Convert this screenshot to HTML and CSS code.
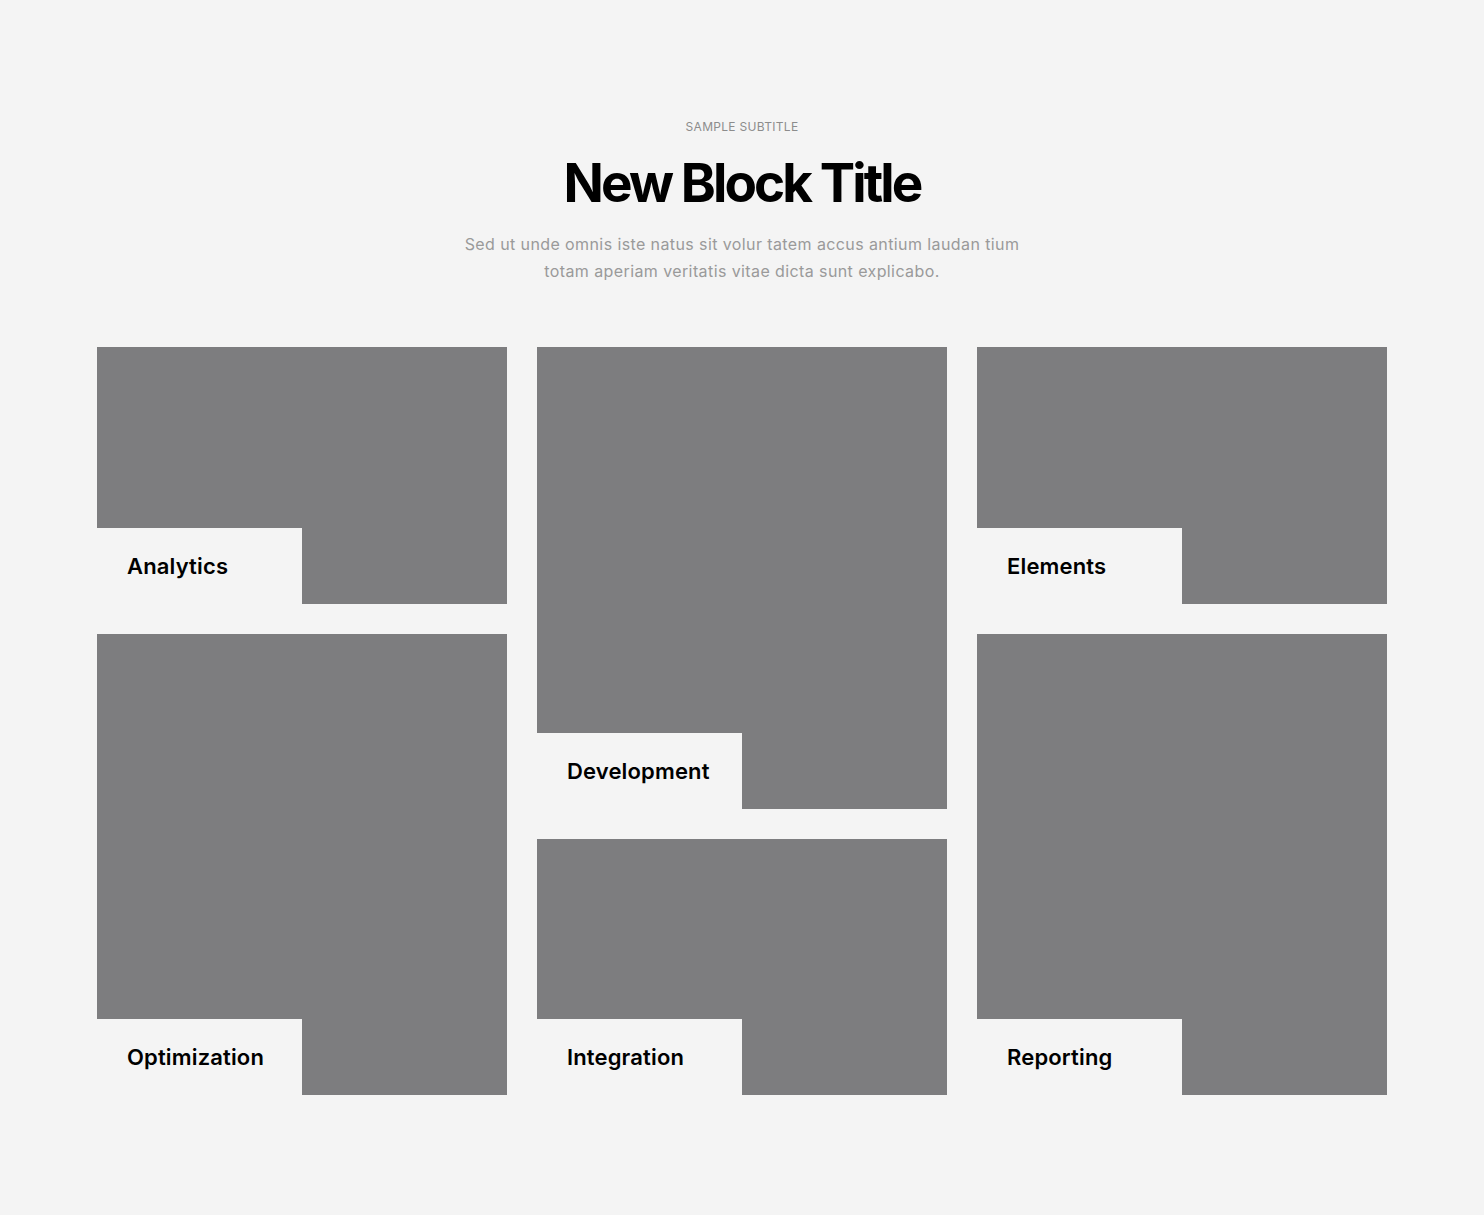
FILE: index.html
```html
<!DOCTYPE html>
<html lang="en">
<head>
    <meta charset="UTF-8">
    <meta name="viewport" content="width=device-width, initial-scale=1.0">
    <title>New Block Title</title>
    <link rel="stylesheet" href="styles.css">
</head>
<body>
    <section class="block">
        <header class="block-head">
            <p class="subtitle">Sample Subtitle</p>
            <h1>New Block Title</h1>
            <p class="lead">Sed ut unde omnis iste natus sit volur tatem accus antium laudan tium totam aperiam veritatis vitae dicta sunt explicabo.</p>
        </header>

        <div class="grid">
            <div class="column">
                <div class="card short"><div class="label">Analytics</div></div>
                <div class="card tall"><div class="label">Optimization</div></div>
            </div>
            <div class="column middle">
                <div class="card tall"><div class="label">Development</div></div>
                <div class="card short"><div class="label">Integration</div></div>
            </div>
            <div class="column">
                <div class="card short"><div class="label">Elements</div></div>
                <div class="card tall"><div class="label">Reporting</div></div>
            </div>
        </div>
    </section>
</body>
</html>
```

FILE: styles.css
```css
body {
    font-family: Inter, 'Noto Sans', sans-serif;
    background-color: #f4f4f4;
    margin: 0;
}
.block {
    padding: 119px 97px 120px;
}
.block-head {
    text-align: center;
    margin-bottom: 62px;
}
.subtitle {
    margin: 0;
    font-size: 12px;
    line-height: 16px;
    text-transform: uppercase;
    letter-spacing: 0.3px;
    color: #8c8c8c;
}
h1 {
    margin: 16px 0 16px;
    font-size: 53px;
    line-height: 64px;
    font-weight: 700;
    letter-spacing: -2.9px;
    color: #000;
}
.lead {
    max-width: 575px;
    margin: 0 auto;
    font-size: 16px;
    line-height: 27px;
    letter-spacing: 0.4px;
    color: #9a9a9a;
}
.grid {
    display: grid;
    grid-template-columns: repeat(3, 1fr);
    gap: 30px;
}
.column {
    display: flex;
    flex-direction: column;
    gap: 30px;
}
.card {
    background-color: #7d7d7f;
    display: flex;
    flex-direction: column;
    justify-content: flex-end;
}
.card.short {
    height: 257px;
}
.card.tall {
    height: 461px;
}
.column.middle .card.short {
    height: 256px;
}
.column.middle .card.tall {
    height: 462px;
}
.label {
    width: 50%;
    height: 76px;
    box-sizing: border-box;
    padding: 0 30px;
    display: flex;
    align-items: center;
    background-color: #f4f4f4;
    font-size: 22px;
    font-weight: 600;
    letter-spacing: 0.15px;
    color: #000;
}
```
